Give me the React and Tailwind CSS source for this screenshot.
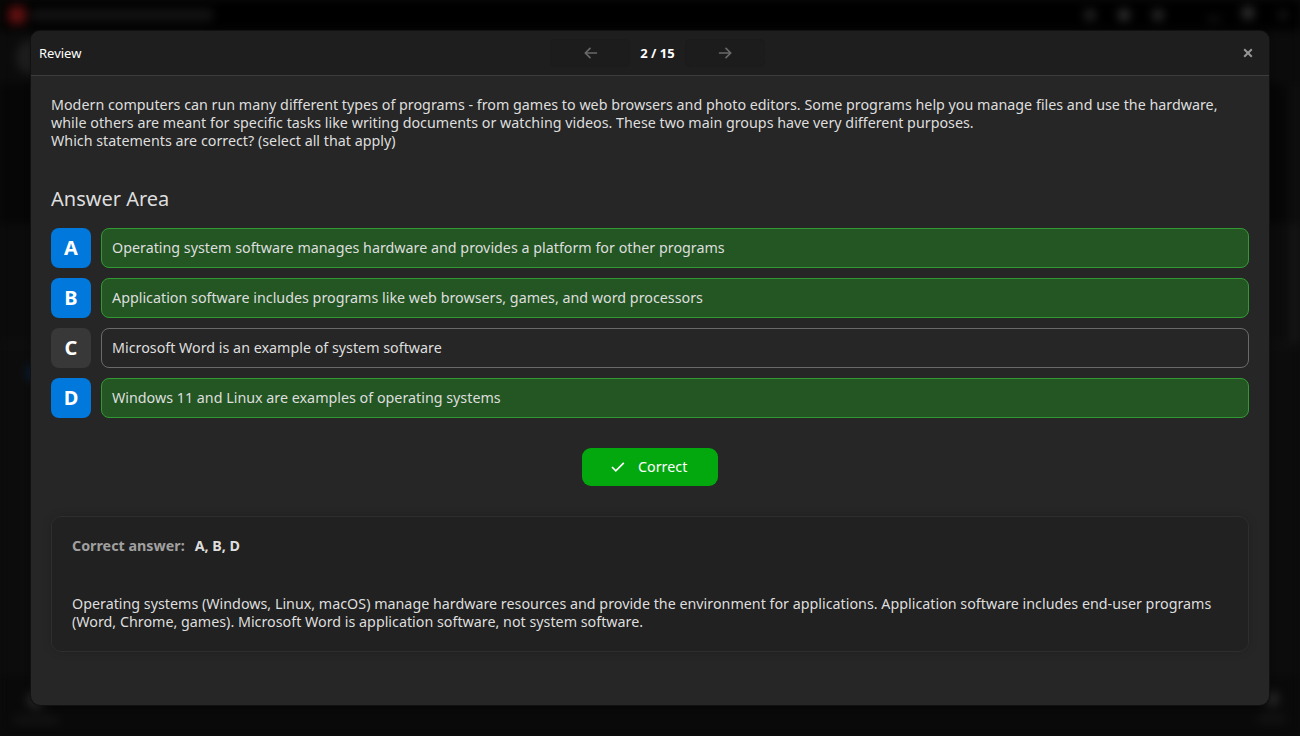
import React, { useState } from "react";

const question = {
  lines: [
    "Modern computers can run many different types of programs - from games to web browsers and photo editors. Some programs help you manage files and use the hardware, while others are meant for specific tasks like writing documents or watching videos. These two main groups have very different purposes.",
    "Which statements are correct? (select all that apply)",
  ],
  options: [
    { letter: "A", text: "Operating system software manages hardware and provides a platform for other programs", correct: true },
    { letter: "B", text: "Application software includes programs like web browsers, games, and word processors", correct: true },
    { letter: "C", text: "Microsoft Word is an example of system software", correct: false },
    { letter: "D", text: "Windows 11 and Linux are examples of operating systems", correct: true },
  ],
  explanation:
    "Operating systems (Windows, Linux, macOS) manage hardware resources and provide the environment for applications. Application software includes end-user programs (Word, Chrome, games). Microsoft Word is application software, not system software.",
};

// Main window, only seen blurred behind the dialog
function Backdrop() {
  return (
    <div className="h-full w-full bg-[#0c0c0c]" aria-hidden="true">
      <div className="flex h-full w-full flex-col blur-[5px]">
        <div className="flex h-[30px] shrink-0 items-center bg-black pl-2">
          <div className="h-[18px] w-[18px] rounded bg-[#5c1010]" />
          <div className="ml-[5px] h-[12px] w-[182px] rounded bg-[#131313]" />
          <div className="ml-auto flex items-center pr-3">
            <div className="mr-[22px] h-3 w-3 rounded-full bg-[#242424]" />
            <div className="mr-[22px] h-3 w-3 rounded-full bg-[#343434]" />
            <div className="mr-[44px] h-3 w-3 rounded-full bg-[#2a2a2a]" />
            <div className="mr-[22px] mt-2 h-1 w-3 bg-[#1a1a1a]" />
            <div className="mr-[24px] mb-1 h-3 w-3 rounded bg-[#303030]" />
            <div className="h-[10px] w-[10px] rounded bg-[#141414]" />
          </div>
        </div>
        <div className="flex h-[54px] shrink-0 items-center bg-[#0b0b0b] pl-4">
          <div className="h-9 w-9 rounded-full bg-[#1d1d1d]" />
        </div>
        <div className="flex h-[140px] shrink-0 justify-between bg-[#060606]">
          <div />
          <div className="w-[12px] bg-[#0e0e0e]" />
        </div>
        <div className="flex h-[122px] shrink-0 justify-end border-b-4 border-[#111111] bg-[#0b0b0b]">
          <div className="w-[10px] bg-[#161616]" />
        </div>
        <div className="flex flex-1 items-start bg-[#0c0c0c] pl-[27px] pt-[19px]">
          <div className="h-4 w-4 rounded-full bg-[#08233e]" />
        </div>
        <div className="flex h-[60px] shrink-0 items-start justify-between bg-[#090909] px-[14px] pt-[15px]">
          <div className="flex flex-col items-center gap-[7px]">
            <div className="h-[18px] w-[18px] rounded-full bg-[#282828]" />
            <div className="h-2 w-11 bg-[#131313]" />
          </div>
          <div className="flex flex-col items-center gap-2">
            <div className="h-4 w-4 rounded-full bg-[#222222]" />
            <div className="h-2 w-7 bg-[#131313]" />
          </div>
        </div>
      </div>
    </div>
  );
}

function ArrowIcon({ right }) {
  return (
    <svg
      viewBox="0 0 14 12"
      className={`mb-px h-3 w-3.5 text-[#686868] ${right ? "rotate-180" : "ml-0.5"}`}
      fill="none"
      stroke="currentColor"
      strokeWidth="1.7"
      strokeLinecap="round"
      strokeLinejoin="round"
    >
      <path d="M6 1.3 L1.3 6 L6 10.7 M1.3 6 H12.4" />
    </svg>
  );
}

function NavButton({ right, onClick }) {
  return (
    <button
      type="button"
      aria-label={right ? "Next" : "Previous"}
      onClick={onClick}
      className="flex h-7 w-20 items-center justify-center rounded-[5px] border border-[#1b1b1b] bg-[#1c1c1c]"
    >
      <ArrowIcon right={right} />
    </button>
  );
}

function Option({ letter, text, correct }) {
  return (
    <div className="flex gap-2.5">
      <div
        className={`flex h-10 w-10 shrink-0 items-center justify-center rounded-lg text-[20px] font-bold text-white ${
          correct ? "bg-[#0078dc]" : "bg-[#383838]"
        }`}
      >
        {letter}
      </div>
      <div
        className={`flex h-10 flex-1 items-center rounded-lg border px-2.5 ${
          correct ? "border-[#339933] bg-[#235623]" : "border-[#6a6a6a]"
        }`}
      >
        {text}
      </div>
    </div>
  );
}

function App() {
  const [page, setPage] = useState(2);
  const total = 15;
  const answer = question.options.filter((o) => o.correct).map((o) => o.letter).join(", ");

  return (
    <div className="relative h-[736px] w-[1300px] overflow-hidden bg-black font-['Noto_Sans',sans-serif]">
      <Backdrop />

      <div className="absolute inset-[31px] flex flex-col overflow-hidden rounded-[9px] bg-[#262626] text-[14.3px] leading-[18px] text-[#dedede] shadow-[0_0_0_1px_#111111,0_2px_6px_rgba(0,0,0,0.4)]">
        {/* Header */}
        <div className="flex h-[45px] shrink-0 items-center border-b border-[#3d3d3d] bg-[#1e1e1e]">
          <div className="w-[519px] pl-2 text-[13px] text-white">Review</div>
          <NavButton onClick={() => setPage((p) => Math.max(1, p - 1))} />
          <div className="w-[55px] text-center text-[13px] font-bold text-white">
            {page} / {total}
          </div>
          <NavButton right onClick={() => setPage((p) => Math.min(total, p + 1))} />
          <button type="button" aria-label="Close" className="ml-auto mr-4 text-[#969696]">
            <svg viewBox="0 0 10 10" className="h-2.5 w-2.5" fill="none" stroke="currentColor" strokeWidth="2">
              <path d="M1.2 1.2 L8.8 8.8 M8.8 1.2 L1.2 8.8" />
            </svg>
          </button>
        </div>

        <div className="flex flex-1 flex-col p-5">
          {/* Question */}
          {question.lines.map((line, idx) => (
            <p key={idx}>{line}</p>
          ))}

          <h2 className="mt-9 text-[20px] leading-[26px]">Answer Area</h2>
          <div className="mt-4 flex flex-col gap-2.5">
            {question.options.map((opt) => (
              <Option key={opt.letter} {...opt} />
            ))}
          </div>

          {/* Result */}
          <div className="mt-[30px] flex h-[38px] w-[136px] items-center self-center rounded-[9px] bg-[#02a80e] pl-[29px] text-white">
            <svg viewBox="0 0 14 10" className="mr-[13px] h-2.5 w-3.5" fill="none" stroke="currentColor" strokeWidth="1.7">
              <path d="M1 5 L4.8 8.8 L12.8 0.9" />
            </svg>
            Correct
          </div>

          {/* Explanation */}
          <div className="mt-[30px] h-[136px] rounded-[10px] border border-[#2e2e2e] bg-[#212121] px-5 pt-5 shadow-[0_0_10px_rgba(0,0,0,0.15)]">
            <div className="flex gap-2.5 font-bold">
              <span className="text-[#a0a0a0]">Correct answer:</span>
              <span>{answer}</span>
            </div>
            <p className="mt-10">{question.explanation}</p>
          </div>
        </div>
      </div>
    </div>
  );
}

export default App;
